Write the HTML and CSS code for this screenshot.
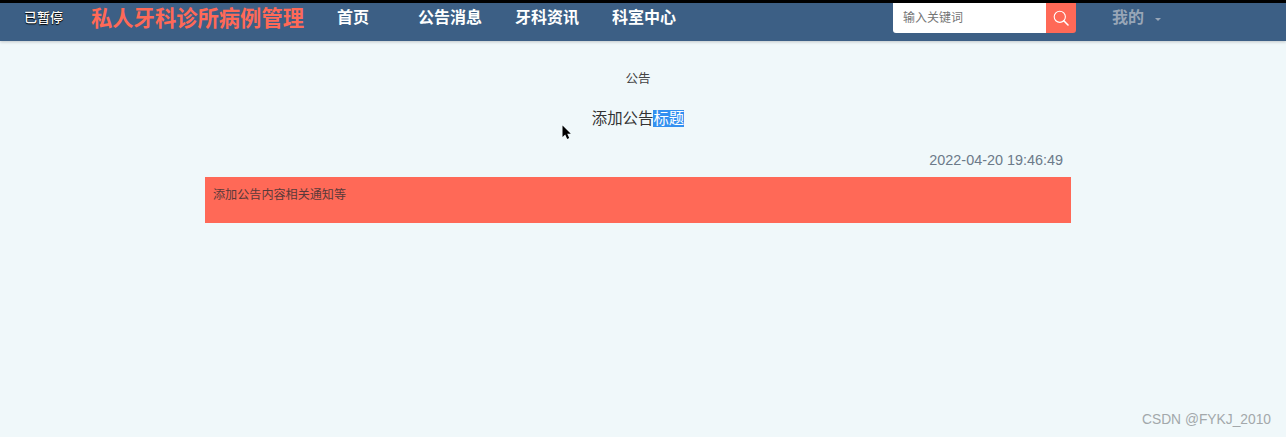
FILE: index.html
```html
<!DOCTYPE html>
<html lang="zh-CN">
<head>
    <meta charset="UTF-8">
    <meta name="viewport" content="width=device-width, initial-scale=1.0">
    <title>公告详情</title>
    <link rel="stylesheet" href="styles.css">
</head>
<body>
    <header class="topbar">
        <span class="paused">已暂停</span>
        <a class="brand">私人牙科诊所病例管理</a>
        <nav class="nav">
            <a class="nav-home">首页</a>
            <a class="nav-notice">公告消息</a>
            <a class="nav-news">牙科资讯</a>
            <a>科室中心</a>
        </nav>
        <form class="search">
            <input class="search-input" type="text" placeholder="输入关键词">
            <button class="search-btn" type="button" aria-label="搜索">
                <svg width="16" height="16" viewBox="0 0 16 16" fill="none" stroke="#fff">
                    <circle cx="6.8" cy="6.8" r="5.6" stroke-width="1.1"/>
                    <path d="M10.8 10.8l4.2 4.2" stroke-width="1.6" stroke-linecap="round"/>
                </svg>
            </button>
        </form>
        <div class="user">
            <span>我的</span>
            <i class="caret"></i>
        </div>
    </header>

    <main class="content">
        <p class="crumb">公告</p>
        <h1 class="notice-title">添加公告<span class="selected">标题</span></h1>
        <p class="notice-time">2022-04-20 19:46:49</p>
        <div class="notice-body">添加公告内容相关通知等</div>
    </main>

    <!-- 鼠标指针 -->
    <svg class="pointer" width="10" height="15" viewBox="0 0 10 15">
        <path d="M0.5 0.5v11.5l2.7-2.5 2 4.5 2-0.9-2-4.3h3.6z" fill="#000"/>
    </svg>

    <div class="watermark">CSDN @FYKJ_2010</div>
</body>
</html>
```

FILE: styles.css
```css
* {
    box-sizing: border-box;
}

html, body {
    height: 100%;
}

body {
    margin: 0;
    position: relative;
    overflow: hidden;
    font-family: "Liberation Sans", "Noto Sans CJK SC", sans-serif;
    background-color: #f0f8fa;
    color: #333;
}

.topbar {
    display: flex;
    align-items: flex-start;
    height: 41px;
    border-top: 3px solid #000;
    background-color: #3c5f85;
    box-shadow: 0 1px 3px rgba(0, 0, 0, 0.2);
    color: #fff;
}

.paused {
    width: 39px;
    margin: 7px 0 0 24px;
    font-size: 13px;
    line-height: 16px;
    font-weight: 500;
    color: #fff;
    text-shadow: 0 0 1px #000, 0 1px 1px #000;
}

.brand {
    margin: 2px 0 0 28px;
    font-size: 21.3px;
    line-height: 28px;
    font-weight: bold;
    color: #ff6957;
    white-space: nowrap;
}

.nav {
    display: flex;
    margin: 5px 0 0 33px;
    font-size: 16px;
    line-height: 20px;
    font-weight: bold;
    white-space: nowrap;
}

.nav-home {
    margin-right: 49px;
}

.nav-notice {
    margin-right: 33px;
}

.nav-news {
    margin-right: 33px;
}

.search {
    display: flex;
    width: 183px;
    height: 30px;
    margin: 0 0 0 217px;
    border-radius: 0 0 3px 3px;
    overflow: hidden;
}

.search-input {
    width: 153px;
    height: 30px;
    padding: 0 10px;
    border: none;
    outline: none;
    background-color: #fff;
    font-family: inherit;
    font-size: 12px;
}

.search-input::placeholder {
    color: #757575;
}

.search-btn {
    display: flex;
    align-items: center;
    justify-content: center;
    width: 30px;
    height: 30px;
    padding: 0;
    border: none;
    background-color: #ff6957;
}

.user {
    display: flex;
    align-items: center;
    margin: 5px 0 0 36px;
    font-size: 16px;
    line-height: 20px;
    font-weight: bold;
    color: #98a6b7;
}

.caret {
    width: 0;
    height: 0;
    margin: 2px 0 0 11px;
    border-style: solid;
    border-width: 3px 3px 0;
    border-color: #98a6b7 transparent transparent;
}

.content {
    width: 866px;
    margin-left: 205px;
    padding-top: 30px;
    text-align: center;
}

.crumb {
    margin: 0;
    font-size: 12.5px;
    line-height: 16px;
    color: #444;
}

.notice-title {
    margin: 22px 0 0;
    font-size: 15.4px;
    line-height: 20px;
    font-weight: normal;
    color: #333;
}

.selected {
    background-color: #3390f0;
    color: #fff;
}

.notice-time {
    margin: 21px 8px 0 0;
    font-size: 14.4px;
    line-height: 20px;
    text-align: right;
    color: #6c7a89;
}

.notice-body {
    height: 46px;
    margin-top: 7px;
    padding: 9px 8px 0;
    background-color: #ff6957;
    font-size: 12.1px;
    line-height: 18px;
    text-align: left;
    color: #5a3a3a;
}

.pointer {
    position: absolute;
    left: 562px;
    top: 125px;
}

.watermark {
    position: absolute;
    right: 15px;
    bottom: 8px;
    font-size: 13.8px;
    line-height: 18px;
    color: #a3a8ab;
}
```
